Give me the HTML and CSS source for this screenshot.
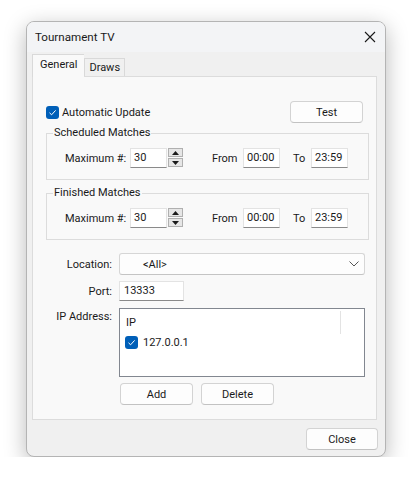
FILE: index.html
```html
<!DOCTYPE html>
<html lang="en">
<head>
  <meta charset="UTF-8">
  <title>Tournament TV</title>
  <link rel="stylesheet" href="styles.css">
</head>
<body>
  <div class="window">
    <div class="titlebar">
      <span class="title">Tournament TV</span>
      <svg class="close-x" width="12" height="12" viewBox="0 0 12 12">
        <path d="M1 1 L11 11 M11 1 L1 11" stroke="#1a1a1a" stroke-width="1.1" fill="none"/>
      </svg>
    </div>

    <div class="content">
      <div class="tabs">
        <div class="tab active">General</div>
        <div class="tab">Draws</div>
      </div>

      <div class="panel">
        <div class="top-row">
          <label class="check"><span class="box"><svg width="13" height="13" viewBox="0 0 13 13"><path d="M3.5 6.8 L5.6 8.8 L9.6 4.4" stroke="#fff" stroke-width="1" fill="none"/></svg></span>Automatic Update</label>
          <button class="btn test-btn">Test</button>
        </div>

        <div class="group">
          <div class="group-title">Scheduled Matches</div>
          <div class="group-row">
            <span class="lbl-max">Maximum #:</span>
            <span class="input num">30</span>
            <span class="spin">
              <span class="spin-btn"><svg width="7" height="4" viewBox="0 0 7 4"><path d="M0 4 L3.5 0 L7 4 Z" fill="#1a1a1a"/></svg></span>
              <span class="spin-btn"><svg width="7" height="4" viewBox="0 0 7 4"><path d="M0 0 L7 0 L3.5 4 Z" fill="#1a1a1a"/></svg></span>
            </span>
            <span class="lbl-from">From</span>
            <span class="input time">00:00</span>
            <span class="lbl-to">To</span>
            <span class="input time">23:59</span>
          </div>
        </div>

        <div class="group">
          <div class="group-title">Finished Matches</div>
          <div class="group-row">
            <span class="lbl-max">Maximum #:</span>
            <span class="input num">30</span>
            <span class="spin">
              <span class="spin-btn"><svg width="7" height="4" viewBox="0 0 7 4"><path d="M0 4 L3.5 0 L7 4 Z" fill="#1a1a1a"/></svg></span>
              <span class="spin-btn"><svg width="7" height="4" viewBox="0 0 7 4"><path d="M0 0 L7 0 L3.5 4 Z" fill="#1a1a1a"/></svg></span>
            </span>
            <span class="lbl-from">From</span>
            <span class="input time">00:00</span>
            <span class="lbl-to">To</span>
            <span class="input time">23:59</span>
          </div>
        </div>

        <div class="form-row location-row">
          <span class="form-label">Location:</span>
          <div class="combo">
            <span class="combo-text">&lt;All&gt;</span>
            <svg width="10" height="6" viewBox="0 0 10 6"><path d="M0.5 0.5 L5 5 L9.5 0.5" stroke="#555" stroke-width="1" fill="none"/></svg>
          </div>
        </div>

        <div class="form-row port-row">
          <span class="form-label">Port:</span>
          <span class="input port">13333</span>
        </div>

        <div class="form-row ip-row">
          <span class="form-label">IP Address:</span>
          <div class="listbox">
            <div class="list-header"><span class="col-ip">IP</span></div>
            <div class="list-item">
              <span class="box"><svg width="13" height="13" viewBox="0 0 13 13"><path d="M3.5 6.8 L5.6 8.8 L9.6 4.4" stroke="#fff" stroke-width="1" fill="none"/></svg></span>
              127.0.0.1
            </div>
          </div>
        </div>

        <div class="list-buttons">
          <button class="btn">Add</button>
          <button class="btn">Delete</button>
        </div>
      </div>
    </div>

    <div class="footer">
      <button class="btn">Close</button>
    </div>
  </div>
</body>
</html>
```

FILE: styles.css
```css
* {
  box-sizing: border-box;
}

body {
  margin: 0;
  background: #ffffff;
  font-family: Roboto, 'Liberation Sans', sans-serif;
  font-size: 11px;
  color: #1a1a1a;
}

.window {
  margin: 21px 0 0 26px;
  width: 360px;
  height: 436px;
  background: #f0f0f0;
  border: 1px solid #b4b4b4;
  border-radius: 8px;
  box-shadow: 0 6px 22px rgba(0, 0, 0, 0.28);
  overflow: hidden;
}

.titlebar {
  height: 30px;
  background: #f3f4f6;
  display: flex;
  align-items: center;
  justify-content: space-between;
  padding: 0 9px 0 8px;
}

.title {
  font-size: 11.6px;
}

.content {
  padding: 3px 8px 0 5px;
}

.tabs {
  display: flex;
  align-items: flex-end;
  height: 21px;
}

.tab {
  height: 18px;
  line-height: 17px;
  padding: 0 4px;
  border: 1px solid #d9d9d9;
  border-bottom: none;
  background: #f0f0f0;
}

.tab.active {
  height: 23px;
  line-height: 20px;
  padding: 0 7px;
  margin-bottom: -1px;
  background: #f9f9f9;
  border-right: none;
  position: relative;
  z-index: 1;
}

.panel {
  height: 344px;
  background: #f9f9f9;
  border: 1px solid #dcdcdc;
  padding: 24px 13px 0 13px;
}

.top-row {
  display: flex;
  align-items: center;
  justify-content: space-between;
}

.check {
  display: flex;
  align-items: center;
  gap: 3px;
}

.box {
  display: inline-block;
  width: 13px;
  height: 13px;
  background: #005fb8;
  border-radius: 3px;
  line-height: 0;
  flex-shrink: 0;
}

.btn {
  font-family: inherit;
  font-size: 11px;
  color: #1a1a1a;
  height: 22px;
  background: #fdfdfd;
  border: 1px solid #d3d3d3;
  border-bottom-color: #c2c2c2;
  border-radius: 4px;
  padding: 0;
}

.test-btn {
  width: 73px;
}

.group {
  margin: 10px -6px 0 0;
  height: 47px;
  border: 1px solid #dcdcdc;
}

.group + .group {
  margin-top: 13px;
}

.group-title {
  display: table;
  line-height: 16px;
  margin: -9px 0 -7px 6px;
  padding: 0 1px;
  background: #f9f9f9;
}

.group-row {
  display: flex;
  align-items: center;
  padding: 14px 0 0 18px;
  white-space: nowrap;
}

.group-row > span {
  flex-shrink: 0;
}

.input {
  display: inline-block;
  height: 20px;
  line-height: 18px;
  background: #ffffff;
  border: 1px solid #e3e3e3;
  border-bottom-color: #8a8a8a;
  padding-left: 4px;
}

.lbl-max {
  width: 65px;
}

.num {
  width: 37px;
  padding-left: 3px;
}

.spin {
  display: flex;
  flex-direction: column;
  gap: 1px;
  margin-left: 1px;
  height: 20px;
}

.spin-btn {
  width: 15px;
  height: 9px;
  background: #e6e6e6;
  border: 1px solid #b0b0b0;
  display: flex;
  align-items: center;
  justify-content: center;
}

.lbl-from {
  margin-left: 29px;
  width: 31px;
}

.time {
  width: 37px;
  padding-left: 3px;
}

.lbl-to {
  margin-left: 13px;
  width: 18px;
}

.form-row {
  display: flex;
  gap: 7px;
  margin-right: -2px;
}

.form-label {
  width: 66px;
  text-align: right;
  flex-shrink: 0;
  white-space: nowrap;
}

.location-row {
  margin-top: 13px;
  align-items: center;
}

.combo {
  flex: 1;
  height: 22px;
  background: #fdfdfd;
  border: 1px solid #d6d6d6;
  border-bottom-color: #c4c4c4;
  border-radius: 3px;
  display: flex;
  align-items: center;
  justify-content: space-between;
  padding: 0 5px 0 23px;
}

.port-row {
  margin-top: 6px;
  align-items: center;
}

.port {
  width: 65px;
}

.ip-row {
  margin-top: 7px;
}

.ip-row .form-label {
  padding-top: 2px;
}

.listbox {
  flex: 1;
  height: 69px;
  background: #ffffff;
  border: 1px solid #828790;
}

.list-header {
  height: 25px;
  display: flex;
  align-items: center;
  padding: 1px 0 0 6px;
}

.col-ip {
  width: 215px;
  height: 23px;
  line-height: 23px;
  border-right: 1px solid #e3e3e3;
}

.list-item {
  display: flex;
  align-items: center;
  gap: 5px;
  padding: 2px 0 0 5px;
}

.list-buttons {
  display: flex;
  gap: 8px;
  margin: 6px 0 0 74px;
}

.list-buttons .btn {
  width: 73px;
}

.footer {
  display: flex;
  justify-content: flex-end;
  padding: 8px 7px 0 0;
}

.footer .btn {
  width: 72px;
}
```
